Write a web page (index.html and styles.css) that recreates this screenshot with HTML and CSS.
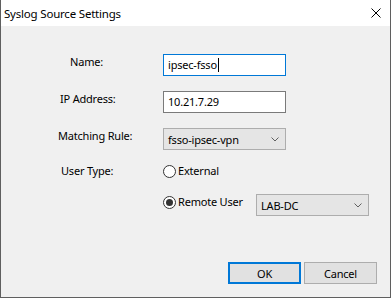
FILE: index.html
```html
<!DOCTYPE html>
<html lang="en">
<head>
  <meta charset="UTF-8">
  <title>Syslog Source Settings</title>
  <link rel="stylesheet" href="styles.css">
</head>
<body>
  <div class="dialog">
    <!-- Title bar -->
    <div class="titlebar">
      <span class="title">Syslog Source Settings</span>
      <svg class="close" width="10" height="10" viewBox="0 0 10 10">
        <path d="M0.5 0.5 L9.5 9.5 M9.5 0.5 L0.5 9.5" stroke="#000" stroke-width="1" fill="none"/>
      </svg>
    </div>

    <div class="content">
      <div class="form">
        <div class="row">
          <span class="label label-name">Name:</span>
          <div class="field field-focus">ipsec-fsso<span class="caret"></span></div>
        </div>
        <div class="row">
          <span class="label label-ip">IP Address:</span>
          <div class="field">10.21.7.29</div>
        </div>
        <div class="row">
          <span class="label label-rule">Matching Rule:</span>
          <div class="select">
            <span>fsso-ipsec-vpn</span>
            <svg class="chevron" width="8" height="5" viewBox="0 0 8 5">
              <path d="M0.5 0.5 L4 4 L7.5 0.5" stroke="#606060" stroke-width="1" fill="none"/>
            </svg>
          </div>
        </div>
        <div class="row row-radio">
          <span class="label label-type">User Type:</span>
          <div class="radio"><span class="dot"></span>External</div>
        </div>
        <div class="row row-remote">
          <span class="label"></span>
          <div class="radio radio-remote"><span class="dot checked"></span>Remote User</div>
          <div class="select select-small">
            <span>LAB-DC</span>
            <svg class="chevron" width="8" height="5" viewBox="0 0 8 5">
              <path d="M0.5 0.5 L4 4 L7.5 0.5" stroke="#606060" stroke-width="1" fill="none"/>
            </svg>
          </div>
        </div>
      </div>

      <!-- Dialog buttons -->
      <div class="buttons">
        <button class="btn btn-default">OK</button>
        <button class="btn">Cancel</button>
      </div>
    </div>
  </div>
</body>
</html>
```

FILE: styles.css
```css
/* General */
body {
  margin: 0;
  font-family: "Noto Sans", "Liberation Sans", sans-serif;
  font-size: 11px;
  letter-spacing: -0.2px;
  color: #000000;
  background: #f0f0f0;
}

.dialog {
  width: 391px;
  height: 298px;
  box-sizing: border-box;
  border: 1px solid #5f5f5f;
  border-top: none;
  background: #f0f0f0;
  display: flex;
  flex-direction: column;
}

/* Title bar */
.titlebar {
  height: 26px;
  background: #ffffff;
  display: flex;
  align-items: center;
  justify-content: space-between;
  padding: 0 9px 0 3px;
  flex-shrink: 0;
}

.title {
  font-size: 11.5px;
}

.close {
  display: block;
}

/* Form */
.content {
  flex: 1;
  display: flex;
  flex-direction: column;
  padding: 28px 13px 0 0;
}

.row {
  display: flex;
  align-items: flex-start;
  height: 22px;
  margin-bottom: 15px;
}

.row-radio {
  height: 16px;
  margin-top: -2px;
  margin-bottom: 15px;
}

.row-remote {
  margin-bottom: 0;
}

.label {
  width: 162px;
  box-sizing: border-box;
  line-height: 16px;
  flex-shrink: 0;
}

.label-name { padding-left: 69px; }
.label-ip { padding-left: 59px; }
.label-rule { padding-left: 57px; }
.label-type { padding-left: 60px; }

.field {
  width: 123px;
  height: 22px;
  box-sizing: border-box;
  border: 1px solid #7a7a7a;
  background: #ffffff;
  padding: 0 4px;
  line-height: 20px;
  display: flex;
  align-items: center;
}

.field-focus {
  border-color: #0078d7;
}

.caret {
  width: 1px;
  height: 14px;
  background: #000000;
  margin-left: 1px;
}

.select {
  width: 123px;
  height: 22px;
  box-sizing: border-box;
  border: 1px solid #adadad;
  background: #e5e5e5;
  padding: 0 6px 0 4px;
  display: flex;
  align-items: center;
  justify-content: space-between;
}

.select-small {
  width: 113px;
}

.chevron {
  display: block;
}

/* Radios */
.radio {
  display: flex;
  align-items: center;
  line-height: 16px;
  gap: 2px;
}

.radio-remote {
  width: 93px;
}

.dot {
  width: 13px;
  height: 13px;
  box-sizing: border-box;
  border: 1px solid #333333;
  border-radius: 50%;
  background: #ffffff;
  display: flex;
  align-items: center;
  justify-content: center;
}

.dot.checked::after {
  content: "";
  width: 7px;
  height: 7px;
  border-radius: 50%;
  background: #333333;
}

/* Buttons */
.buttons {
  margin-top: auto;
  margin-bottom: 13px;
  display: flex;
  justify-content: flex-end;
  gap: 3px;
}

.btn {
  width: 73px;
  height: 22px;
  box-sizing: border-box;
  border: 1px solid #adadad;
  background: #e1e1e1;
  font-family: inherit;
  font-size: 11px;
  letter-spacing: inherit;
  color: #000000;
  padding: 0;
}

.btn-default {
  border: 2px solid #0078d7;
}
```
